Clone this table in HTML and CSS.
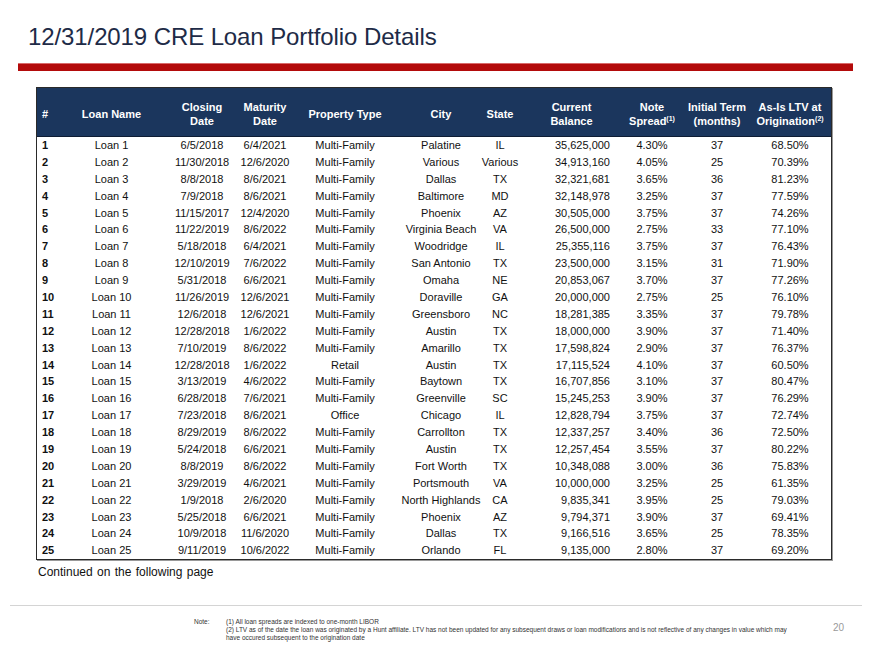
FILE: index.html
```html
<!DOCTYPE html>
<html>
<head>
<meta charset="utf-8">
<link rel="stylesheet" href="styles.css">
</head>
<body>
<div class="slide">
  <h1 class="title">12/31/2019 CRE Loan Portfolio Details</h1>
  <div class="rule"></div>
  <div class="table">
    <div class="row head">
      <div class="c num"><span>#</span></div>
      <div class="c"><span>Loan Name</span></div>
      <div class="c"><span>Closing<br>Date</span></div>
      <div class="c"><span>Maturity<br>Date</span></div>
      <div class="c"><span>Property Type</span></div>
      <div class="c"><span>City</span></div>
      <div class="c"><span>State</span></div>
      <div class="c"><span>Current<br>Balance</span></div>
      <div class="c"><span>Note<br>Spread<sup>(1)</sup></span></div>
      <div class="c"><span>Initial Term<br>(months)</span></div>
      <div class="c"><span>As-Is LTV at<br>Origination<sup>(2)</sup></span></div>
    </div>
    <div class="body" id="body"></div>
  </div>
  <div class="continued">Continued on the following page</div>
  <div class="footer">
    <div class="notes">
      <div class="note-label">Note:</div>
      <div class="note-text">
        <div>(1) All loan spreads are indexed to one-month LIBOR</div>
        <div>(2) LTV as of the date the loan was originated by a Hunt affiliate. LTV has not been updated for any subsequent draws or loan modifications and is not reflective of any changes in value which may have occured subsequent to the origination date</div>
      </div>
    </div>
    <div class="page">20</div>
  </div>
</div>
<script src="script.js"></script>
</body>
</html>
```

FILE: script.js
```js
const rows = [
["1","Loan 1","6/5/2018","6/4/2021","Multi-Family","Palatine","IL","35,625,000","4.30%","37","68.50%"],
["2","Loan 2","11/30/2018","12/6/2020","Multi-Family","Various","Various","34,913,160","4.05%","25","70.39%"],
["3","Loan 3","8/8/2018","8/6/2021","Multi-Family","Dallas","TX","32,321,681","3.65%","36","81.23%"],
["4","Loan 4","7/9/2018","8/6/2021","Multi-Family","Baltimore","MD","32,148,978","3.25%","37","77.59%"],
["5","Loan 5","11/15/2017","12/4/2020","Multi-Family","Phoenix","AZ","30,505,000","3.75%","37","74.26%"],
["6","Loan 6","11/22/2019","8/6/2022","Multi-Family","Virginia Beach","VA","26,500,000","2.75%","33","77.10%"],
["7","Loan 7","5/18/2018","6/4/2021","Multi-Family","Woodridge","IL","25,355,116","3.75%","37","76.43%"],
["8","Loan 8","12/10/2019","7/6/2022","Multi-Family","San Antonio","TX","23,500,000","3.15%","31","71.90%"],
["9","Loan 9","5/31/2018","6/6/2021","Multi-Family","Omaha","NE","20,853,067","3.70%","37","77.26%"],
["10","Loan 10","11/26/2019","12/6/2021","Multi-Family","Doraville","GA","20,000,000","2.75%","25","76.10%"],
["11","Loan 11","12/6/2018","12/6/2021","Multi-Family","Greensboro","NC","18,281,385","3.35%","37","79.78%"],
["12","Loan 12","12/28/2018","1/6/2022","Multi-Family","Austin","TX","18,000,000","3.90%","37","71.40%"],
["13","Loan 13","7/10/2019","8/6/2022","Multi-Family","Amarillo","TX","17,598,824","2.90%","37","76.37%"],
["14","Loan 14","12/28/2018","1/6/2022","Retail","Austin","TX","17,115,524","4.10%","37","60.50%"],
["15","Loan 15","3/13/2019","4/6/2022","Multi-Family","Baytown","TX","16,707,856","3.10%","37","80.47%"],
["16","Loan 16","6/28/2018","7/6/2021","Multi-Family","Greenville","SC","15,245,253","3.90%","37","76.29%"],
["17","Loan 17","7/23/2018","8/6/2021","Office","Chicago","IL","12,828,794","3.75%","37","72.74%"],
["18","Loan 18","8/29/2019","8/6/2022","Multi-Family","Carrollton","TX","12,337,257","3.40%","36","72.50%"],
["19","Loan 19","5/24/2018","6/6/2021","Multi-Family","Austin","TX","12,257,454","3.55%","37","80.22%"],
["20","Loan 20","8/8/2019","8/6/2022","Multi-Family","Fort Worth","TX","10,348,088","3.00%","36","75.83%"],
["21","Loan 21","3/29/2019","4/6/2021","Multi-Family","Portsmouth","VA","10,000,000","3.25%","25","61.35%"],
["22","Loan 22","1/9/2018","2/6/2020","Multi-Family","North Highlands","CA","9,835,341","3.95%","25","79.03%"],
["23","Loan 23","5/25/2018","6/6/2021","Multi-Family","Phoenix","AZ","9,794,371","3.90%","37","69.41%"],
["24","Loan 24","10/9/2018","11/6/2020","Multi-Family","Dallas","TX","9,166,516","3.65%","25","78.35%"],
["25","Loan 25","9/11/2019","10/6/2022","Multi-Family","Orlando","FL","9,135,000","2.80%","37","69.20%"]
];
const body = document.getElementById("body");
rows.forEach(r => {
  const row = document.createElement("div");
  row.className = "row data";
  r.forEach((v, i) => {
    const c = document.createElement("div");
    c.className = "c" + (i === 0 ? " num" : "") + (i === 7 ? " bal" : "");
    c.textContent = v;
    row.appendChild(c);
  });
  body.appendChild(row);
});
```

FILE: styles.css
```css
html, body {
  margin: 0;
  padding: 0;
  background: #ffffff;
}
.slide {
  width: 870px;
  height: 652px;
  position: relative;
  font-family: "Liberation Sans", Arial, sans-serif;
  color: #000;
  overflow: hidden;
}
.title {
  margin: 0;
  padding: 23px 0 0 28px;
  font-size: 24px;
  line-height: 28px;
  font-weight: normal;
  color: #1e2b47;
  letter-spacing: -0.1px;
}
.rule {
  margin: 12px 17px 0 18px;
  height: 8px;
  background: #b30b0b;
  border-top: 1px solid #d86a6a;
  box-sizing: border-box;
}
.table {
  margin: 16px 0 0 36px;
  width: 796px;
  border: 1px solid #2a2a2a;
  box-sizing: border-box;
  box-shadow: 1px 1px 0 #9a9a9a;
}
.row {
  display: grid;
  grid-template-columns: 27px 95px 86px 40px 120px 72px 46px 97px 64px 66px 80px;
}
.c {
  display: flex;
  align-items: center;
  justify-content: center;
  text-align: center;
  white-space: nowrap;
}
.head {
  height: 49px;
  padding-top: 3px;
  background: #1b365d;
  color: #fff;
  font-weight: bold;
  font-size: 11px;
  line-height: 14px;
  border-bottom: 1px solid #0e1c33;
  box-sizing: border-box;
}
.head sup {
  font-size: 7px;
  line-height: 0;
  vertical-align: 4px;
}
.c.num {
  justify-content: flex-start;
  padding-left: 5px;
}
.data {
  height: 16.9px;
  font-size: 11px;
  line-height: 16.9px;
  color: #111;
}
.data .num {
  font-weight: bold;
}
.data .bal {
  justify-content: flex-end;
  padding-right: 10px;
}
.continued {
  margin: 5px 0 0 38px;
  font-size: 12px;
  line-height: 14px;
  color: #111;
  word-spacing: 1px;
}
.footer {
  margin: 26px 8px 0 10px;
  border-top: 1px solid #d4d4d4;
  display: flex;
  padding-top: 12px;
}
.notes {
  display: flex;
  margin-left: 184px;
  width: 604px;
  font-size: 6.5px;
  line-height: 8px;
  color: #333;
}
.note-label {
  width: 32px;
  flex: none;
}
.note-text {
  flex: 1;
}
.page {
  margin-left: 35px;
  margin-top: 4px;
  font-size: 10px;
  color: #9a9a9a;
}
```
